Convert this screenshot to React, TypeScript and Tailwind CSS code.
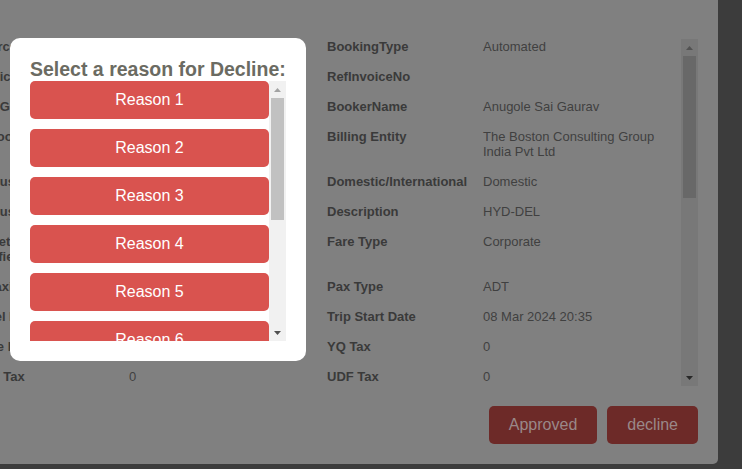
import React from 'react'

type Row = { left: [string, string]; right: [string, string] }

const rows: Row[] = [
  { left: ['Source', 'Online'], right: ['BookingType', 'Automated'] },
  { left: ['Invoice No', 'INV-240308'], right: ['RefInvoiceNo', ''] },
  { left: ['Pax GSTIN', '36AAACB1234F1Z5'], right: ['BookerName', 'Anugole Sai Gaurav'] },
  { left: ['Is Booked', 'Yes'], right: ['Billing Entity', 'The Boston Consulting Group India Pvt Ltd'] },
  { left: ['Exclusive', 'No'], right: ['Domestic/International', 'Domestic'] },
  { left: ['Exclusive Tax', '0'], right: ['Description', 'HYD-DEL'] },
  { left: ['Ticket Agency Markup Notified', '0'], right: ['Fare Type', 'Corporate'] },
  { left: ['Is Taxi', 'No'], right: ['Pax Type', 'ADT'] },
  { left: ['Hotel Name', '-'], right: ['Trip Start Date', '08 Mar 2024 20:35'] },
  { left: ['Base Fare', '4520'], right: ['YQ Tax', '0'] },
  { left: ['GST Tax', '0'], right: ['UDF Tax', '0'] },
  { left: ['K3 Tax', '0'], right: ['Total Fare', '5102'] },
]

const reasons = Array.from({ length: 10 }, (_, i) => `Reason ${i + 1}`)

function Arrow({ up, color }: { up?: boolean; color: string }) {
  return (
    <svg width="7" height="4" viewBox="0 0 7 4" className="block">
      <polygon points={up ? '0,4 7,4 3.5,0' : '0,0 7,0 3.5,4'} fill={color} />
    </svg>
  )
}

export default function App() {
  return (
    <div className="relative w-[742px] h-[469px] overflow-hidden bg-[#3c3c3c] font-['Liberation_Sans',Arial,sans-serif]">
      {/* dimmed details modal */}
      <div className="w-[765px] h-[464px] -ml-[47px] bg-[#808080] rounded-br-[5px] px-5 pt-[39px] pb-5 flex flex-col">
        <div className="flex h-[347px]">
          <div className="flex-1 overflow-hidden">
            <div className="grid grid-cols-[156px_198px_156px_198px] text-[13px] leading-[15px]">
              {rows.map((r, i) => (
                <React.Fragment key={i}>
                  <div className="pb-[15px] pr-1 font-bold text-[#3a3a3a]">{r.left[0]}</div>
                  <div className="pb-[15px] pr-3 text-[#404040]">{r.left[1]}</div>
                  <div className="pb-[15px] pr-1 font-bold text-[#3a3a3a]">{r.right[0]}</div>
                  <div className="pb-[15px] pr-3 text-[#404040]">{r.right[1]}</div>
                </React.Fragment>
              ))}
            </div>
          </div>
          <div className="w-[17px] bg-[#787878] flex flex-col">
            <div className="h-[17px] flex items-center justify-center">
              <Arrow up color="#525252" />
            </div>
            <div className="flex-1 px-[2px]">
              <div className="h-[142px] bg-[#686868]" />
            </div>
            <div className="h-[17px] flex items-center justify-center">
              <Arrow color="#282828" />
            </div>
          </div>
        </div>
        <div className="flex justify-end gap-2.5 mt-5">
          <button className="h-[38px] px-5 rounded-[5px] bg-[#6d2a28] text-[#9a8888] text-base">Approved</button>
          <button className="h-[38px] px-5 rounded-[5px] bg-[#6d2a28] text-[#9a8888] text-base">decline</button>
        </div>
      </div>

      {/* decline reason popup */}
      <div className="absolute left-[10px] top-[38px] w-[296px] h-[323px] bg-white rounded-[10px] p-5">
        <h2 className="text-[19.5px] font-bold leading-[23px] text-[#6b6b62] whitespace-nowrap">
          Select a reason for Decline:
        </h2>
        <div className="flex h-[260px]">
          <div className="w-[239px] overflow-hidden flex flex-col gap-2.5">
            {reasons.map((r) => (
              <button
                key={r}
                className="shrink-0 h-[38px] w-full rounded-[5px] bg-[#d9534f] text-white text-base"
              >
                {r}
              </button>
            ))}
          </div>
          <div className="w-[17px] bg-[#f1f1f1] flex flex-col">
            <div className="h-[17px] flex items-center justify-center">
              <Arrow up color="#a3a3a3" />
            </div>
            <div className="flex-1 px-[2px]">
              <div className="h-[122px] bg-[#c1c1c1]" />
            </div>
            <div className="h-[17px] flex items-center justify-center">
              <Arrow color="#505050" />
            </div>
          </div>
        </div>
      </div>
    </div>
  )
}
